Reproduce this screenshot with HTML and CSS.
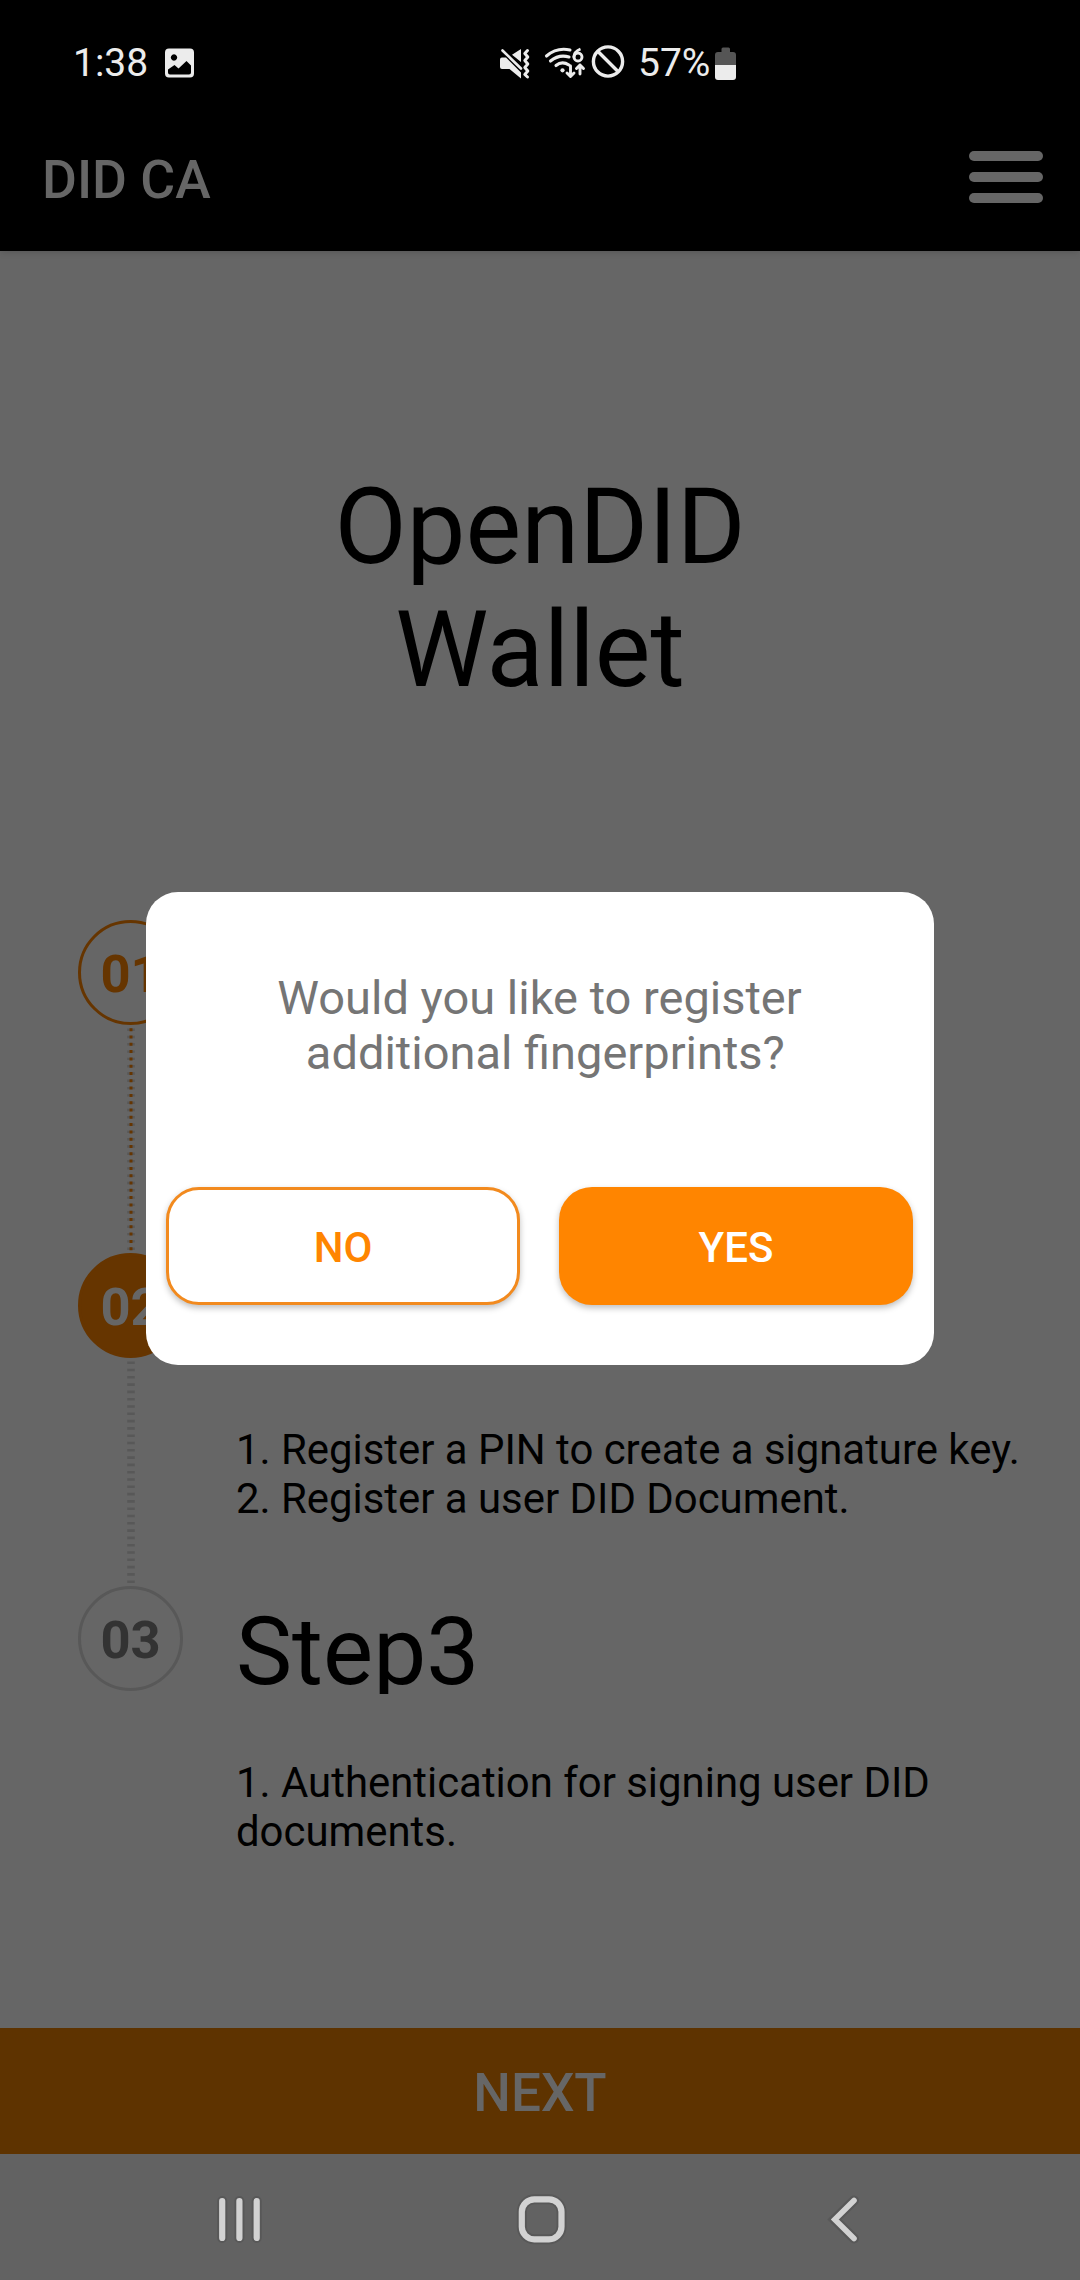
FILE: index.html
```html
<!DOCTYPE html>
<html lang="en">
<head>
<meta charset="utf-8">
<title>DID CA</title>
<link rel="stylesheet" href="styles.css">
</head>
<body>
<div class="screen">
  <header class="top">
    <div class="status">
      <span class="clock">1:38</span>
      <svg class="photo" width="30" height="30" viewBox="0 0 30 30"><path fill="#ececec" fill-rule="evenodd" d="M4 0.500H25Q29 0.500 29 4.500V25.500Q29 29.500 25 29.500H4Q0 29.500 0 25.500V4.500Q0 0.500 4 0.500ZM3 21.500V24.500Q3 26.500 5 26.500H24Q26 26.500 26 24.500V17.500L21.500 13L13.500 20.500L9.500 17ZM9 6.300a3.200 3.200 0 1 0 .01 0Z"/></svg>
      <svg class="signals" width="128" height="40" viewBox="0 0 128 40" fill="none" stroke="#ececec">
        <path fill="#ececec" stroke="none" d="M2 12.500H6L21 27.500V33.500L9.500 24H2Q0 24 0 22V14.500Q0 12.500 2 12.500ZM21 4V17L12 9.800Z"/>
        <path stroke-width="2.600" stroke-linecap="round" d="M2.500 5.500L21 23.500"/>
        <path stroke-width="3" stroke-linecap="round" stroke-linejoin="round" d="M27.500 5.500L24.800 8.500L27.800 12L24.800 15.500L27.800 19L24.800 22.500L27.800 26L24.800 29.500L27.500 32"/>
        <path stroke-width="3.100" stroke-linecap="round" d="M46.500 11Q57 2 70 5M50.500 16Q59 9 69 12M56 20.500Q62 15.500 69 20"/>
        <circle cx="62.500" cy="25.300" r="2.100" fill="#ececec" stroke="none"/>
        <path stroke-width="2.900" d="M80.500 4Q74 6.500 73.800 12.500"/>
        <circle cx="78" cy="12" r="4" stroke-width="2.900"/>
        <path stroke-width="2.900" stroke-linecap="round" stroke-linejoin="round" d="M70.500 21V31.500M67 28L70.500 31.500L74 28M80 29V20M76.500 23.500L80 20L83.500 23.500"/>
        <circle cx="108" cy="16.500" r="14.600" stroke-width="3.400"/>
        <path stroke-width="3.400" d="M98 6.500L118 26.500"/>
      </svg>
      <span class="percent">57%</span>
      <svg class="battery" width="22" height="33" viewBox="0 0 22 33"><path fill="#555" d="M6.500 5V2Q6.500 0.500 8 0.500H13.500Q15 0.500 15 2V5H18Q21 5 21 8V18H0V8Q0 5 3 5Z"/><path fill="#ececec" d="M0 18H21V30Q21 33 18 33H3Q0 33 0 30Z"/></svg>
    </div>
    <div class="appbar">
      <h1 class="brand">DID CA</h1>
      <div class="menu"><i class="menu-line"></i><i class="menu-line"></i><i class="menu-line"></i></div>
    </div>
  </header>
  <main class="content">
    <h2 class="title">OpenDID<br>Wallet</h2>
    <div class="steps">
      <section class="step">
        <div class="rail">
          <div class="badge done">01</div>
          <svg class="dots" width="8" height="228" viewBox="0 0 8 228"><path stroke="#585858" stroke-width="7.500" stroke-dasharray="2.400 4.900" d="M4 3.500V226"/><path stroke="#663500" stroke-width="3" stroke-dasharray="3 4.300" d="M4 3.200V226"/></svg>
        </div>
      </section>
      <section class="step">
        <div class="rail">
          <div class="badge current">02</div>
          <svg class="dots" width="8" height="228" viewBox="0 0 8 228"><path stroke="#585858" stroke-width="7.500" stroke-dasharray="2.600 4.700" d="M4 3.400V226"/></svg>
        </div>
        <div class="info second">
          <p class="desc">1. Register a PIN to create a signature key.<br>2. Register a user DID Document.</p>
        </div>
      </section>
      <section class="step">
        <div class="rail">
          <div class="badge">03</div>
        </div>
        <div class="info">
          <h3 class="name">Step3</h3>
          <p class="desc">1. Authentication for signing user DID<br>documents.</p>
        </div>
      </section>
    </div>
  </main>
  <div class="next">NEXT</div>
  <nav class="navbar">
    <svg width="1080" height="126" viewBox="0 0 1080 126" fill="none" stroke-linecap="round">
      <g stroke="#585858" stroke-width="10">
        <path d="M222.200 47V84M239.400 47V84M256.700 47V84M854 46.500L834.500 65.500L854 84.500"/>
        <rect x="521.800" y="45.300" width="39.700" height="40" rx="12.500"/>
      </g>
      <g stroke="#d2d2d2" stroke-width="6.200">
        <path d="M222.200 47V84M239.400 47V84M256.700 47V84"/>
        <rect x="521.800" y="45.300" width="39.700" height="40" rx="12.500"/>
        <path stroke-width="5.600" d="M854 46.500L834.800 65.500L854 84.500"/>
      </g>
    </svg>
  </nav>
  <div class="dialog">
    <p class="question">Would you like to register<br>&nbsp;additional fingerprints?</p>
    <div class="actions">
      <button class="btn no">NO</button>
      <button class="btn yes">YES</button>
    </div>
  </div>
</div>
</body>
</html>
```
FILE: styles.css
```css
* { box-sizing: border-box; margin: 0; padding: 0; }
body { font-family: Roboto, "Liberation Sans", sans-serif; background: #666; }
svg { display: block; flex: none; }

.screen { position: relative; width: 1080px; height: 2280px; display: flex; flex-direction: column; background: #666; overflow: hidden; }

.top { height: 251px; background: #000; box-shadow: 0 0 8px rgba(0,0,0,.2); }
.status { height: 125px; display: flex; align-items: flex-start; padding-left: 73px; color: #ececec; }
.clock { width: 92px; font-size: 39px; line-height: 48px; margin-top: 39px; }
.photo { margin-top: 48px; }
.signals { margin: 45px 0 0 305px; }
.percent { width: 77px; font-size: 39px; line-height: 48px; margin: 39px 0 0 10px; }
.battery { margin-top: 47px; }

.appbar { height: 126px; display: flex; justify-content: space-between; align-items: flex-start; padding: 24px 37px 0 42px; }
.brand { font-size: 53.5px; line-height: 62px; font-weight: 500; color: #666; }
.menu { display: flex; flex-direction: column; gap: 11px; margin-top: 2px; }
.menu-line { width: 74px; height: 10px; border-radius: 5px; background: #666; }

.content { height: 1777px; }
.title { padding-top: 215px; text-align: center; font-size: 105px; line-height: 123px; font-weight: 400; color: #000; }
.steps { margin-top: 208px; padding-left: 78px; }
.step { height: 333px; display: flex; gap: 53px; }
.rail { width: 105px; display: flex; flex-direction: column; align-items: center; }
.badge { width: 105px; height: 105px; border: 3px solid #585858; border-radius: 50%; color: #333; font-size: 52.5px; font-weight: 700; line-height: 103px; text-align: center; }
.done { border-color: #663500; color: #663500; }
.current { border-color: #663500; background: #663500; color: #666; }
.info { color: #000; }
.second { padding-top: 172px; }
.name { height: 108px; overflow: hidden; font-size: 94.5px; line-height: 110px; padding-top: 11px; font-weight: 400; }
.name + .desc { margin-top: 64px; }
.desc { font-size: 41.9px; line-height: 49px; white-space: nowrap; }

.next { height: 126px; background: #5e3300; color: #666; font-size: 53px; line-height: 130px; font-weight: 500; text-align: center; }
.navbar { height: 126px; background: #626262; }

.dialog { position: absolute; left: 146px; top: 892px; width: 788px; height: 473px; border-radius: 32px; background: #fff; padding: 78px 21px 0 20px; }
.question { text-align: center; font-size: 47px; line-height: 55px; color: #757575; }
.actions { display: flex; justify-content: space-between; margin-top: 107px; }
.btn { width: 354px; height: 118px; border: 0; border-radius: 33px; font-family: inherit; font-size: 42px; font-weight: 500; line-height: 50px; padding-top: 3px; box-shadow: 0 3px 6px rgba(0,0,0,.25); }
.no { border: 3px solid #f28a1e; background: #fff; color: #ff8500; }
.yes { background: #ff8500; color: #fff; }
```
